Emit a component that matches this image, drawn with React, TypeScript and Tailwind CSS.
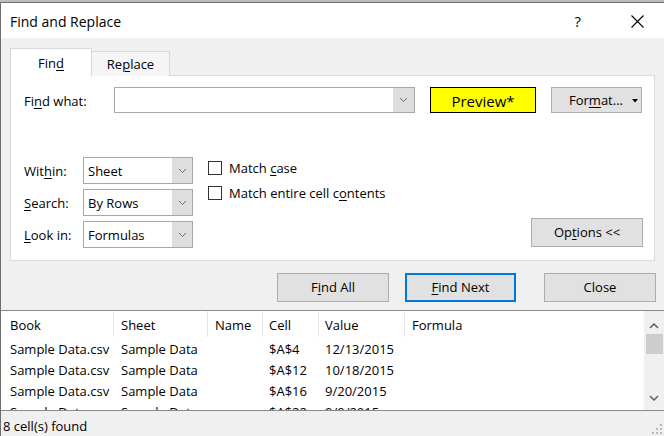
import type { ReactElement, ReactNode } from "react";

const font = "font-['Open_Sans',sans-serif]";

const Chevron = (): ReactElement => (
  <svg width="9" height="6" viewBox="0 0 9 6" fill="none">
    <path d="M1 1l3.5 3.5L8 1" stroke="#6b6b6b" strokeWidth="1" />
  </svg>
);

const U = ({ children }: { children: ReactNode }): ReactElement => (
  <span className="underline underline-offset-2 decoration-1">{children}</span>
);

interface SelectBoxProps {
  value: string;
}

const SelectBox = ({ value }: SelectBoxProps): ReactElement => (
  <div className="flex h-[27px] w-[110px] border border-[#a8a8a8] bg-white">
    <div className="flex flex-1 items-center pl-[4px] pt-[2px]">{value}</div>
    <div className="flex w-[20px] items-center justify-center bg-[#dedede]">
      <Chevron />
    </div>
  </div>
);

interface ButtonProps {
  children: ReactNode;
  className?: string;
}

const Button = ({ children, className = "" }: ButtonProps): ReactElement => (
  <div
    className={`flex items-center justify-center border border-[#adadad] bg-[#e1e1e1] pt-[1px] ${className}`}
  >
    {children}
  </div>
);

const Checkbox = ({ children }: { children: ReactNode }): ReactElement => (
  <div className="flex h-[25px] items-center gap-[7px]">
    <div className="h-[14px] w-[14px] border border-[#333] bg-white" />
    <span className="pt-[2px]">{children}</span>
  </div>
);

const rows: string[][] = [
  ["Sample Data.csv", "Sample Data", "", "$A$4", "12/13/2015"],
  ["Sample Data.csv", "Sample Data", "", "$A$12", "10/18/2015"],
  ["Sample Data.csv", "Sample Data", "", "$A$16", "9/20/2015"],
  ["Sample Data.csv", "Sample Data", "", "$A$22", "9/9/2015"],
];

const headers: string[] = ["Book", "Sheet", "Name", "Cell", "Value", "Formula"];
const pads: string[] = ["pl-[9px]", "pl-[7px]", "pl-[7px]", "pl-[6px]", "pl-[6px]", "pl-[7px]"];

export default function App(): ReactElement {
  return (
    <div
      className={`${font} flex h-[436px] w-[664px] flex-col overflow-hidden bg-white text-[13px] text-black`}
    >
      <div className="h-[2px] bg-[#bdbdbd]" />
      <div className="flex flex-1 flex-col border-l border-t border-[#707070]">
        {/* title bar */}
        <div className="flex h-[35px] items-center bg-white pl-[9px] pt-[2px] text-[14px]">
          <span>Find and Replace</span>
          <span className="ml-auto mr-[50px] text-[15px]">?</span>
          <svg width="13" height="13" viewBox="0 0 13 13" className="mr-[20px]">
            <path d="M0.5 0.5l12 12M12.5 0.5l-12 12" stroke="#000" strokeWidth="1.1" />
          </svg>
        </div>

        <div className="flex flex-1 flex-col bg-[#f0f0f0]">
          {/* tabs */}
          <div className="relative z-10 -mb-px flex items-end pl-[9px] pt-[10px]">
            <div className="flex h-[28px] w-[82px] items-center justify-center border border-b-0 border-[#d9d9d9] bg-white pt-[3px]">
              Fin<U>d</U>
            </div>
            <div className="flex h-[25px] w-[78px] items-center justify-center border border-b-0 border-l-0 border-[#d9d9d9] bg-[#f5f5f5] pt-[2px]">
              Re<U>p</U>lace
            </div>
          </div>

          {/* panel */}
          <div className="ml-[9px] flex h-[186px] w-[645px] flex-col border border-[#dcdcdc] bg-white">
            <div className="mt-[11px] flex items-center">
              <div className="w-[103px] pl-[13px] pt-[4px]">
                Fi<U>n</U>d what:
              </div>
              <div className="flex h-[26px] w-[301px] border border-[#a8a8a8] bg-white">
                <div className="flex-1" />
                <div className="flex w-[21px] items-center justify-center bg-[#dedede]">
                  <Chevron />
                </div>
              </div>
              <div className="ml-[15px] flex h-[26px] w-[106px] items-center justify-center border border-black bg-[#ffff00] pt-[2px] text-[15px]">
                Preview*
              </div>
              <Button className="ml-[15px] h-[26px] w-[91px] gap-[9px] pl-[14px]">
                <span>
                  For<U>m</U>at...
                </span>
                <svg width="6" height="4" viewBox="0 0 6 4">
                  <path d="M0 0h6L3 3.5z" fill="#000" />
                </svg>
              </Button>
            </div>

            <div className="mt-[44px] flex items-end">
              <div className="flex flex-col gap-[5px] pl-[13px]">
                <div className="flex items-center">
                  <span className="w-[59px] pt-[2px]">
                    Wit<U>h</U>in:
                  </span>
                  <SelectBox value="Sheet" />
                </div>
                <div className="flex items-center">
                  <span className="w-[59px] pt-[2px]">
                    <U>S</U>earch:
                  </span>
                  <SelectBox value="By Rows" />
                </div>
                <div className="flex items-center">
                  <span className="w-[59px] pt-[2px]">
                    <U>L</U>ook in:
                  </span>
                  <SelectBox value="Formulas" />
                </div>
              </div>
              <div className="-mt-[2px] ml-[15px] flex flex-col self-start">
                <Checkbox>
                  Match <U>c</U>ase
                </Checkbox>
                <Checkbox>
                  Match entire cell c<U>o</U>ntents
                </Checkbox>
              </div>
              <Button className="mb-[1px] ml-auto mr-[11px] h-[29px] w-[112px]">
                <span>
                  Op<U>t</U>ions &lt;&lt;
                </span>
              </Button>
            </div>
          </div>

          {/* action buttons */}
          <div className="mt-[12px] flex">
            <Button className="ml-[276px] h-[29px] w-[112px]">
              <span>
                F<U>i</U>nd All
              </span>
            </Button>
            <div className="ml-[16px] flex h-[29px] w-[111px] items-center justify-center border-2 border-[#0078d7] bg-[#e1e1e1] pt-[1px]">
              <span>
                <U>F</U>ind Next
              </span>
            </div>
            <Button className="ml-[28px] h-[29px] w-[112px]">Close</Button>
          </div>

          {/* results list */}
          <div className="mt-[8px] flex h-[101px] border-b border-t border-[#8a8a8a] bg-white">
            <div className="flex-1 overflow-hidden">
              <div className="grid h-[26px] grid-cols-[113px_94px_55px_56px_86px_1fr] items-center">
                {headers.map((h, i) => (
                  <div
                    key={h}
                    className={`flex h-full items-center pt-[4px] ${pads[i]} ${i < 5 ? "border-r border-[#e5e5e5]" : ""}`}
                  >
                    {h}
                  </div>
                ))}
              </div>
              {rows.map((r, ri) => (
                <div
                  key={ri}
                  className="grid h-[21px] grid-cols-[113px_94px_55px_56px_86px_1fr] leading-[21px]"
                >
                  {r.map((c, ci) => (
                    <div key={ci} className={`whitespace-nowrap pt-[2px] ${pads[ci]}`}>
                      {c}
                    </div>
                  ))}
                  <div />
                </div>
              ))}
            </div>
            <div className="flex w-[20px] flex-col items-center bg-[#f0f0f0]">
              <svg width="10" height="6" viewBox="0 0 10 6" className="mt-[12px]">
                <path d="M1 5l4-4 4 4" stroke="#606060" strokeWidth="1.5" fill="none" />
              </svg>
              <div className="mt-[5px] h-[20px] w-[17px] bg-[#cdcdcd]" />
              <svg width="10" height="6" viewBox="0 0 10 6" className="mb-[9px] mt-auto">
                <path d="M1 1l4 4 4-4" stroke="#606060" strokeWidth="1.5" fill="none" />
              </svg>
            </div>
          </div>

          {/* status */}
          <div className="flex h-[25px] items-center bg-[#f0f0f0] pl-[2px] pt-[6px]">
            <span>8 cell(s) found</span>
            <svg width="10" height="10" viewBox="0 0 10 10" className="ml-auto mr-[2px] mt-[4px]">
              <rect x="8" y="0" width="2" height="2" fill="#b8b8b8" />
              <rect x="4" y="4" width="2" height="2" fill="#b8b8b8" />
              <rect x="8" y="4" width="2" height="2" fill="#b8b8b8" />
              <rect x="0" y="8" width="2" height="2" fill="#b8b8b8" />
              <rect x="4" y="8" width="2" height="2" fill="#b8b8b8" />
              <rect x="8" y="8" width="2" height="2" fill="#b8b8b8" />
            </svg>
          </div>
        </div>
      </div>
    </div>
  );
}
